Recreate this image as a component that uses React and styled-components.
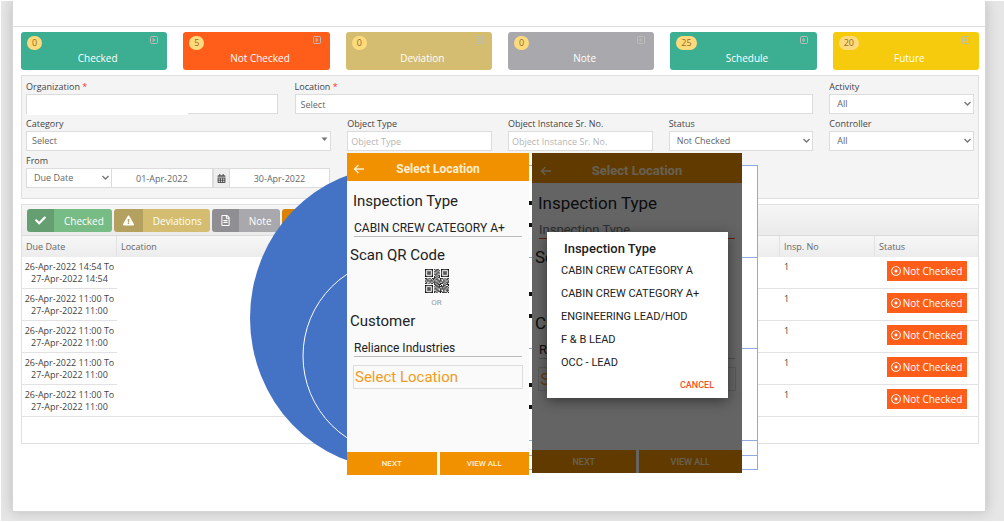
import React from "react";
import styled, { createGlobalStyle, css } from "styled-components";
import {
  FaCheck,
  FaExclamationTriangle,
  FaRegFileAlt,
  FaRegDotCircle,
  FaCalendarAlt,
} from "react-icons/fa";

const GlobalStyle = createGlobalStyle`
  *, *::before, *::after { box-sizing: border-box; }
  body {
    margin: 0;
    background: #fff;
    font-family: "Open Sans", "Noto Sans", sans-serif;
    font-size: 9px;
    color: #444;
  }
  button, input, select { font: inherit; color: inherit; margin: 0; }
`;

const Page = styled.div`
  display: flex;
  flex-direction: column;
  min-height: calc(100vh - 2px);
  margin: 1px 0 1px 1px;
  padding: 0 18px 9px 11px;
  background: #e6e6e6;
  overflow: hidden;
`;

const Sheet = styled.main`
  position: relative;
  flex: 1;
  padding-bottom: 60px;
  background: #fff;
  border: 1px solid #d6d6d6;
  border-top: 0;
  box-shadow: 0 0 12px rgba(0, 0, 0, 0.18);
`;

const TopBar = styled.header`
  height: 26px;
  border-bottom: 1px solid #dedede;
`;

const Content = styled.div`
  display: flex;
  flex-direction: column;
  gap: 5px;
  padding: 5px 6px 0 8px;
`;

/* Summary cards */

const Cards = styled.div`
  display: grid;
  grid-template-columns: repeat(6, 1fr);
  gap: 16px;
`;

const Card = styled.button`
  display: grid;
  grid-template-columns: 1fr auto;
  grid-template-rows: 14px 16px;
  height: 38px;
  padding: 4px 9px 4px 6px;
  border: 0;
  border-radius: 3px;
  background: ${(p) => p.$color};
  color: #fff;
`;

const Count = styled.span`
  justify-self: start;
  height: 14px;
  min-width: 15px;
  padding: 0 5px;
  border-radius: 7px;
  background: #fddb7c;
  color: #9a6a1c;
  font-size: 9px;
  line-height: 13px;
  text-align: center;
`;

const CardLabel = styled.span`
  grid-column: 1 / -1;
  padding-left: 10px;
  font-size: 10px;
  line-height: 16px;
  text-align: center;
`;

/* Filters */

const Panel = styled.section`
  border: 1px solid #e0e0e0;
  background: ${(p) => p.$fill || "#fff"};
`;

const Filters = styled.form`
  display: grid;
  grid-template-columns: repeat(6, 1fr);
  gap: 4px 16px;
  padding: 5px 4px 10px;
`;

const FieldBox = styled.div`
  grid-column: span ${(p) => p.$span || 1};
  min-width: 0;
`;

const SplitRow = styled.div`
  grid-column: span 5;
  display: grid;
  grid-template-columns: 32fr 66fr;
  gap: 17px;
`;

const Label = styled.label`
  display: block;
  height: 12px;
  margin-bottom: 1px;
  line-height: 11px;
  color: #444;
  white-space: nowrap;
`;

const Required = styled.span`
  color: #f33;
`;

const control = css`
  display: block;
  width: 100%;
  height: 20px;
  border: 1px solid #dcdcdc;
  border-radius: 0;
  background: #fff;
  color: #666;
  font-size: 9px;
  line-height: 16px;
  outline: 0;
`;

const Input = styled.input`
  ${control}
  padding: 0 ${(p) => p.$pad || 3}px;
  text-align: ${(p) => p.$align || "left"};
  &::placeholder { color: #b5b5b5; opacity: 1; }
`;

const SelectWrap = styled.div`
  position: relative;
  svg {
    position: absolute;
    right: ${(p) => (p.$caret ? 3 : 2)}px;
    top: ${(p) => (p.$caret ? 6 : 7)}px;
    pointer-events: none;
  }
`;

const SelectControl = styled.select`
  ${control}
  appearance: none;
  padding: 0 12px 0 ${(p) => p.$pad || 7}px;
`;

const Cover = styled.div`
  position: relative;
  &::after {
    content: "";
    position: absolute;
    left: 1px;
    bottom: -1px;
    width: 64%;
    height: 3px;
    background: #fff;
  }
`;

const DateRow = styled.div`
  display: grid;
  grid-template-columns: 86px 1fr 16px 1fr;
  & > * + * { margin-left: -1px; }
`;

const CalendarButton = styled.button`
  display: grid;
  place-items: center;
  height: 20px;
  padding: 0;
  border: 1px solid #dcdcdc;
  background: #eee;
  color: #555;
`;

/* Grid of inspections */

const Toolbar = styled.div`
  display: flex;
  gap: 2px;
  height: 31px;
  padding: 4px 5px;
  border-bottom: 1px solid #dcdcdc;
  background: linear-gradient(#f6f6f6, #eaeaea);
`;

const ToolButton = styled.button`
  display: flex;
  align-items: stretch;
  height: 23px;
  padding: 0;
  border: 0;
  border-radius: 3px;
  overflow: hidden;
  background: ${(p) => p.$color};
  color: #fff;
  font-size: 10px;
`;

const ToolIcon = styled.span`
  display: grid;
  place-items: center;
  width: ${(p) => p.$width}px;
  background: rgba(0, 0, 0, 0.15);
`;

const ToolText = styled.span`
  align-self: center;
  padding: 0 8px 0 10px;
  line-height: 20px;
`;

const Table = styled.table`
  width: 100%;
  margin-bottom: 26px;
  border-collapse: separate;
  border-spacing: 0;
  table-layout: fixed;
`;

const HeadCell = styled.th`
  width: ${(p) => (p.$width ? p.$width + "px" : "auto")};
  height: 21px;
  padding: 0 4px;
  border-right: 1px solid #e2e2e2;
  background: linear-gradient(#f7f7f7, #ececec);
  color: #666;
  font-weight: 400;
  line-height: 12px;
  text-align: left;
  &:last-child { border-right: 0; }
`;

const Cell = styled.td`
  height: 32px;
  padding: 4px 4px 3px;
  border-bottom: 1px solid ${(p) => (p.$open ? "transparent" : "#e2e2e2")};
  line-height: 12px;
  text-align: ${(p) => p.$align || "left"};
  vertical-align: top;
  white-space: nowrap;
  tr:last-child > & { border-bottom-color: #e2e2e2; }
`;

const DateCell = styled(Cell)`
  padding-left: 2px;
  padding-right: 2px;
`;

const StatusButton = styled.button`
  display: flex;
  align-items: center;
  justify-content: center;
  gap: 2px;
  width: 80px;
  height: 20px;
  margin: 0 auto;
  padding: 0;
  border: 0;
  background: #ff5e1a;
  color: #fff;
  font-size: 10px;
  line-height: 18px;
`;

/* Overlaid artwork and phone screens */

const Stage = styled.div`
  position: absolute;
  left: 237px;
  top: 152px;
  width: 509px;
  height: 322px;
`;

const Artwork = styled.svg`
  position: absolute;
  inset: 0;
`;

const Phone = styled.section`
  position: absolute;
  left: ${(p) => p.$left}px;
  top: 0;
  display: flex;
  flex-direction: column;
  width: ${(p) => p.$width}px;
  height: ${(p) => p.$height}px;
  background: #fafafa;
  color: #222;
  font-family: Roboto, "Liberation Sans", sans-serif;
`;

const PhoneBar = styled.header`
  display: grid;
  grid-template-columns: 12px 1fr 12px;
  align-items: center;
  height: ${(p) => (p.$large ? 30 : 28)}px;
  padding: ${(p) => (p.$large ? "6px 8px 0" : "3px 6px 0")};
  background: #f29100;
  color: #ffefd2;
`;

const BackButton = styled.button`
  display: grid;
  place-items: center;
  padding: 0;
  border: 0;
  background: none;
  color: inherit;
`;

const PhoneTitle = styled.h2`
  margin: 0;
  font-size: ${(p) => (p.$large ? 13 : 12)}px;
  line-height: 16px;
  font-weight: 700;
  text-align: center;
`;

const PhoneBody = styled.div`
  flex: 1;
  display: flex;
  flex-direction: column;
  padding: 10px 6px 0 3px;
`;

const Heading = styled.h3`
  margin: 0;
  padding-left: ${(p) => (p.$inset ? 3 : 0)}px;
  font-size: ${(p) => (p.$large ? 17 : 15)}px;
  line-height: 20px;
  font-weight: 400;
`;

const PhoneInput = styled.input`
  height: 18px;
  margin: 8px 1px 8px 4px;
  padding: 0;
  border: 0;
  border-bottom: 1px solid ${(p) => p.$line || "#bbb"};
  border-radius: 0;
  background: none;
  color: #222;
  font-size: ${(p) => (p.$large ? 13 : 12)}px;
  line-height: 16px;
  &::placeholder { color: #777; opacity: 1; }
`;

const QrSvg = styled.svg`
  align-self: center;
  margin: 4px 0;
`;

const Or = styled.p`
  margin: 0 0 2px;
  font-size: 8px;
  line-height: 12px;
  color: #999;
  text-align: center;
`;

const PickLocation = styled.button`
  height: 24px;
  margin: 0 0 0 3px;
  padding: 0 1px;
  border: 1px solid #ddd;
  background: none;
  color: #f29b1d;
  font-size: ${(p) => (p.$large ? 17 : 15)}px;
  line-height: 20px;
  text-align: left;
`;

const PhoneActions = styled.div`
  display: grid;
  grid-template-columns: 1fr 1fr;
  gap: 3px;
`;

const ActionButton = styled.button`
  height: 23px;
  padding: 0;
  border: 0;
  background: #f29100;
  color: #ffefd2;
  font-size: ${(p) => (p.$large ? 9 : 8)}px;
  font-weight: 500;
`;

const Scrim = styled.div`
  position: absolute;
  inset: 0;
  background: rgba(0, 0, 0, 0.6);
`;

const Dialog = styled.div`
  position: absolute;
  left: 15px;
  right: 14px;
  top: 79px;
  display: flex;
  flex-direction: column;
  padding: 8px 14px 5px;
  background: #fff;
  box-shadow: 0 3px 12px rgba(0, 0, 0, 0.45);
`;

const DialogTitle = styled.h3`
  margin: 0 0 1px 3px;
  font-size: 13px;
  line-height: 18px;
  font-weight: 500;
`;

const Options = styled.ul`
  margin: 0;
  padding: 0;
  list-style: none;
`;

const Option = styled.button`
  display: block;
  height: 23px;
  padding: 0;
  border: 0;
  background: none;
  color: #222;
  font-size: 11px;
  line-height: 20px;
`;

const CancelButton = styled.button`
  align-self: flex-end;
  height: 16px;
  margin-top: 3px;
  padding: 0;
  border: 0;
  background: none;
  color: #f4511e;
  font-size: 9px;
  font-weight: 500;
`;

const cards = [
  { label: "Checked", count: 0, color: "#3cae92" },
  { label: "Not Checked", count: 5, color: "#ff5e1a" },
  { label: "Deviation", count: 0, color: "#d4bd70" },
  { label: "Note", count: 0, color: "#a9a8ad" },
  { label: "Schedule", count: 25, color: "#3cae92" },
  { label: "Future", count: 20, color: "#f6ca0d" },
];

const rows = [
  ["26-Apr-2022 14:54 To", "27-Apr-2022 14:54"],
  ["26-Apr-2022 11:00 To", "27-Apr-2022 11:00"],
  ["26-Apr-2022 11:00 To", "27-Apr-2022 11:00"],
  ["26-Apr-2022 11:00 To", "27-Apr-2022 11:00"],
  ["26-Apr-2022 11:00 To", "27-Apr-2022 11:00"],
];

const inspectionTypes = [
  "CABIN CREW CATEGORY A",
  "CABIN CREW CATEGORY A+",
  "ENGINEERING LEAD/HOD",
  "F & B LEAD",
  "OCC - LEAD",
];

const qrRows = [
  "111111101011001111111",
  "100000100110101000001",
  "101110101101001011101",
  "101110100011101011101",
  "101110101110001011101",
  "100000100101101000001",
  "111111101010101111111",
  "000000001101100000000",
  "110110111010011101011",
  "011001010111010010110",
  "101111101001111011001",
  "010010011110100110111",
  "110101101011011101010",
  "000000001101110010111",
  "111111100110101011001",
  "100000101011111110110",
  "101110100101100101101",
  "101110101110011111010",
  "101110100011010010111",
  "100000101101111010010",
  "111111101010010111101",
];

function QrCode() {
  return (
    <QrSvg width="24" height="24" viewBox="0 0 21 21" role="img" aria-label="QR code">
      {qrRows.flatMap((line, y) =>
        [...line].map((bit, x) =>
          bit === "1" ? (
            <rect key={x + "-" + y} x={x} y={y} width="1" height="1" fill="#111" />
          ) : null
        )
      )}
    </QrSvg>
  );
}

function ExpandIcon() {
  return (
    <svg width="8" height="8" viewBox="0 0 8 8" fill="none" stroke="#b9bdba" aria-hidden="true">
      <rect x="0.5" y="0.5" width="7" height="7" rx="1" />
      <path d="M3 2.5v3M3 2.5l2 1.5-2 1.5" />
    </svg>
  );
}

function SelectField({ id, label, value, pad, caret, span }) {
  return (
    <FieldBox $span={span}>
      <Label htmlFor={id}>{label}</Label>
      <Picker id={id} value={value} pad={pad} caret={caret} />
    </FieldBox>
  );
}

function Picker({ id, value, pad, caret }) {
  return (
    <SelectWrap $caret={caret}>
      <SelectControl id={id} $pad={pad}>
        <option>{value}</option>
      </SelectControl>
      {caret ? (
        <svg width="7" height="5" viewBox="0 0 7 5" aria-hidden="true">
          <path d="M0.5 0.5h6L3.5 4z" fill="#777" />
        </svg>
      ) : (
        <svg width="9" height="6" viewBox="0 0 9 6" fill="none" aria-hidden="true">
          <path d="M1.5 1l3 3 3-3" stroke="#777" strokeWidth="1.4" />
        </svg>
      )}
    </SelectWrap>
  );
}

function PhoneScreen({ left, width, height, large, type, line, children }) {
  const id = large ? "back" : "front";
  return (
    <Phone $left={left} $width={width} $height={height}>
      <PhoneBar $large={large}>
        <BackButton aria-label="Back">
          <svg width="12" height="10" viewBox="0 0 12 10" fill="none" stroke="currentColor" strokeWidth="1.4" aria-hidden="true">
            <path d="M11 5H1.5M5.5 1l-4 4 4 4" />
          </svg>
        </BackButton>
        <PhoneTitle $large={large}>Select Location</PhoneTitle>
      </PhoneBar>
      <PhoneBody>
        <Heading $large={large} $inset>
          <label htmlFor={id + "-type"}>Inspection Type</label>
        </Heading>
        <PhoneInput
          id={id + "-type"}
          $large={large}
          $line={line}
          defaultValue={type}
          placeholder="Inspection Type"
        />
        <Heading $large={large}>Scan QR Code</Heading>
        <QrCode />
        <Or>OR</Or>
        <Heading $large={large}>
          <label htmlFor={id + "-customer"}>Customer</label>
        </Heading>
        <PhoneInput id={id + "-customer"} $large={large} defaultValue="Reliance Industries" />
        <PickLocation $large={large}>Select Location</PickLocation>
      </PhoneBody>
      <PhoneActions>
        <ActionButton $large={large}>NEXT</ActionButton>
        <ActionButton $large={large}>VIEW ALL</ActionButton>
      </PhoneActions>
      {children}
    </Phone>
  );
}

export default function App() {
  return (
    <>
      <GlobalStyle />
      <Page>
        <Sheet>
          <TopBar />
          <Content>
            <Cards>
              {cards.map((c) => (
                <Card key={c.label} $color={c.color}>
                  <Count>{c.count}</Count>
                  <ExpandIcon />
                  <CardLabel>{c.label}</CardLabel>
                </Card>
              ))}
            </Cards>

            <Panel $fill="#f4f4f4">
              <Filters>
                <SplitRow>
                  <FieldBox>
                    <Label htmlFor="organization">
                      Organization <Required>*</Required>
                    </Label>
                    <Cover>
                      <Input id="organization" />
                    </Cover>
                  </FieldBox>
                  <FieldBox>
                    <Label htmlFor="location">
                      Location <Required>*</Required>
                    </Label>
                    <Input id="location" $pad={5} defaultValue="Select" />
                  </FieldBox>
                </SplitRow>
                <SelectField id="activity" label="Activity" value="All" />
                <SelectField id="category" label="Category" value="Select" pad={5} caret span={2} />
                <FieldBox>
                  <Label htmlFor="object-type">Object Type</Label>
                  <Input id="object-type" placeholder="Object Type" />
                </FieldBox>
                <FieldBox>
                  <Label htmlFor="serial">Object Instance Sr. No.</Label>
                  <Input id="serial" placeholder="Object Instance Sr. No." />
                </FieldBox>
                <SelectField id="status" label="Status" value="Not Checked" />
                <SelectField id="controller" label="Controller" value="All" />
                <FieldBox $span={2}>
                  <Label htmlFor="from-kind">From</Label>
                  <DateRow>
                    <Picker id="from-kind" value="Due Date" />
                    <Input aria-label="Start date" defaultValue="01-Apr-2022" $align="center" />
                    <CalendarButton type="button" aria-label="Open calendar">
                      <FaCalendarAlt size={9} />
                    </CalendarButton>
                    <Input aria-label="End date" defaultValue="30-Apr-2022" $align="center" />
                  </DateRow>
                </FieldBox>
              </Filters>
            </Panel>

            <Panel>
              <Toolbar>
                <ToolButton $color="#77bb85">
                  <ToolIcon $width={27}>
                    <FaCheck size={11} />
                  </ToolIcon>
                  <ToolText>Checked</ToolText>
                </ToolButton>
                <ToolButton $color="#d4bd70">
                  <ToolIcon $width={29}>
                    <FaExclamationTriangle size={11} />
                  </ToolIcon>
                  <ToolText>Deviations</ToolText>
                </ToolButton>
                <ToolButton $color="#a9a8ad">
                  <ToolIcon $width={27}>
                    <FaRegFileAlt size={11} />
                  </ToolIcon>
                  <ToolText>Note</ToolText>
                </ToolButton>
                <ToolButton $color="#ff9900" aria-label="More">
                  <ToolIcon $width={27} />
                </ToolButton>
              </Toolbar>
              <Table>
                <thead>
                  <tr>
                    <HeadCell $width={95}>Due Date</HeadCell>
                    <HeadCell>Location</HeadCell>
                    <HeadCell />
                    <HeadCell $width={95}>Insp. No</HeadCell>
                    <HeadCell $width={103}>Status</HeadCell>
                  </tr>
                </thead>
                <tbody>
                  {rows.map(([from, to], i) => (
                    <tr key={i}>
                      <DateCell $align="center">
                        {from}
                        <br />
                        {to}
                      </DateCell>
                      <Cell $open />
                      <Cell />
                      <Cell>1</Cell>
                      <Cell>
                        <StatusButton>
                          <FaRegDotCircle size={10} /> Not Checked
                        </StatusButton>
                      </Cell>
                    </tr>
                  ))}
                </tbody>
              </Table>
            </Panel>
          </Content>

          <Stage>
            <Artwork width="509" height="322" viewBox="0 0 509 322" aria-hidden="true">
              <ellipse cx="145" cy="165" rx="145" ry="151" fill="#4472c4" />
              <ellipse cx="151" cy="203" rx="98" ry="98" fill="none" stroke="#fff" />
              <rect x="279" y="0" width="3" height="322" fill="#fff" />
              <rect x="145" y="12.5" width="362.5" height="304" fill="#fff" stroke="#8faadc" />
              <path
                d="M145 104.5h362M145 195.5h362M145 287.5h362M145 302.5h362"
                fill="none"
                stroke="#8faadc"
              />
              <path
                d="M279 50h3M279 72h3M279 141h3M279 163h3M279 232h3M279 254h3"
                stroke="#111"
                strokeWidth="4"
              />
            </Artwork>
            <PhoneScreen left={97} width={182} height={322} type="CABIN CREW CATEGORY A+" />
            <PhoneScreen left={282} width={210} height={320} large line="#f4511e">
              <Scrim />
              <Dialog role="dialog" aria-label="Inspection Type">
                <DialogTitle>Inspection Type</DialogTitle>
                <Options>
                  {inspectionTypes.map((t) => (
                    <li key={t}>
                      <Option>{t}</Option>
                    </li>
                  ))}
                </Options>
                <CancelButton>CANCEL</CancelButton>
              </Dialog>
            </PhoneScreen>
          </Stage>
        </Sheet>
      </Page>
    </>
  );
}
